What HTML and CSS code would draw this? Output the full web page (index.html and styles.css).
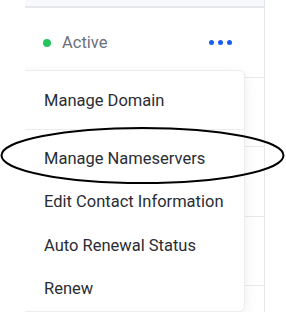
FILE: index.html
```html
<!DOCTYPE html>
<html lang="en">
<head>
  <meta charset="UTF-8" />
  <meta name="viewport" content="width=device-width, initial-scale=1.0" />
  <title>Domains</title>
  <link rel="stylesheet" href="styles.css">
</head>
<body>
  <main class="page">
    <div class="table">
      <div class="row head"></div>
      <div class="row">
        <div class="status">
          <span class="dot"></span>
          <span>Active</span>
        </div>
        <button class="more" aria-label="More actions">
          <span></span><span></span><span></span>
        </button>
      </div>
      <div class="row"></div>
      <div class="row"></div>
      <div class="row"></div>
      <div class="row"></div>

      <div class="menu">
        <a class="menu-item" href="#">Manage Domain</a>
        <hr class="divider">
        <a class="menu-item" href="#">Manage Nameservers</a>
        <a class="menu-item" href="#">Edit Contact Information</a>
        <a class="menu-item" href="#">Auto Renewal Status</a>
        <a class="menu-item" href="#">Renew</a>
      </div>
    </div>

    <svg class="mark" width="286" height="312" viewBox="0 0 286 312">
      <ellipse cx="142.5" cy="155.5" rx="141" ry="27.5" fill="none" stroke="#000" stroke-width="2"/>
    </svg>
  </main>
</body>
</html>
```

FILE: styles.css
```css
* {
  box-sizing: border-box;
}

body {
  margin: 0;
  background: #fff;
  font-family: Roboto, "Liberation Sans", sans-serif;
  font-size: 16px;
}

.page {
  position: relative;
  width: 286px;
  height: 312px;
  overflow: hidden;
  padding-left: 25px;
}

.table {
  position: relative;
  width: 240px;
  height: 312px;
  overflow: hidden;
  border-right: 1px solid #e6e7ea;
}

.row {
  height: 69.5px;
  border-bottom: 1px solid #e8e9ec;
  display: flex;
  align-items: center;
  justify-content: space-between;
  padding: 0 32px 0 18px;
}

.row.head {
  height: 8px;
  background: #f8f9fc;
  border-bottom: 2px solid #e6e7ea;
}

.status {
  display: flex;
  align-items: center;
  gap: 11px;
  color: #6b6f7a;
  font-size: 16.5px;
  margin-top: 1px;
}

.dot {
  width: 8px;
  height: 8px;
  border-radius: 50%;
  background: #22c55e;
}

.more {
  display: flex;
  gap: 4px;
  padding: 0;
  border: none;
  background: none;
  cursor: pointer;
}

.more span {
  width: 5px;
  height: 5px;
  border-radius: 50%;
  background: #1c5cf0;
}

.menu {
  position: absolute;
  left: -6px;
  top: 70px;
  width: 226px;
  padding-top: 8px;
  background: #fff;
  border: 1px solid #ececef;
  border-radius: 6px;
  box-shadow: 0 4px 14px rgba(0, 0, 0, 0.07);
}

.menu-item {
  display: flex;
  align-items: center;
  height: 43.5px;
  padding-left: 24px;
  color: #2a2d34;
  text-decoration: none;
  font-size: 16.5px;
}

.divider {
  margin: 6px 0 7px;
  border: none;
  border-top: 1px solid #ececef;
}

.mark {
  position: absolute;
  left: 0;
  top: 0;
  pointer-events: none;
}
```
